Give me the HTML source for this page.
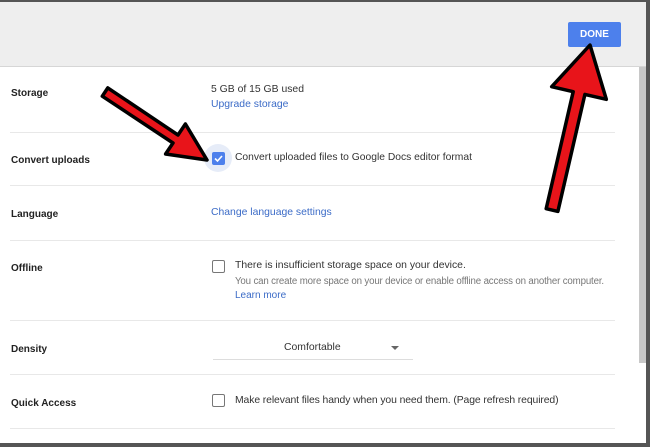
<!DOCTYPE html>
<html><head><style>
body{margin:0;width:650px;height:447px;overflow:hidden;background:#555;font-family:"Liberation Sans",sans-serif;position:relative}
.win{position:absolute;left:0;top:2px;width:646px;height:441px;background:#fff}
.hdr{position:absolute;left:0;top:0;width:646px;height:64px;background:#eeeeee;border-bottom:1px solid #d6d6d6}
.done{position:absolute;left:568px;top:20px;width:53px;height:25px;background:#4d80ec;color:#fff;font-size:10px;font-weight:bold;text-align:center;line-height:25px;border-radius:2px}
.sb{position:absolute;left:639px;top:65px;width:7px;height:296px;background:#c8c8c8}
.hr{position:absolute;left:10px;width:605px;height:1px;background:#e8e8e8}
.t{position:absolute;font-size:10.4px;color:#333;white-space:nowrap}
.lb{font-weight:bold;font-size:10px;color:#222}
.lnk{color:#3b6bc7}
.g{color:#777}
.cb{position:absolute;width:11px;height:11px;border:1.5px solid #777;border-radius:2px}
</style></head><body>
<div class="win">
<div class="hdr"><div class="done">DONE</div></div>
<div class="sb"></div>
<div class="hr" style="top:130px"></div>
<div class="hr" style="top:183px"></div>
<div class="hr" style="top:238px"></div>
<div class="hr" style="top:318px"></div>
<div class="hr" style="top:372px"></div>
<div class="hr" style="top:426px"></div>
<div class="t lb" style="left:11px;top:86px">Storage</div>
<div class="t" style="left:211px;top:82px">5 GB of 15 GB used</div>
<div class="t lnk" style="left:211px;top:97px">Upgrade storage</div>
<div class="t lb" style="left:11px;top:153px">Convert uploads</div>
<div style="position:absolute;left:204px;top:142px;width:28px;height:28px;border-radius:50%;background:#e6ecf8"></div>
<div style="position:absolute;left:212px;top:150px;width:13px;height:13px;background:#4d80ec;border-radius:2px"><svg width="13" height="13"><path d="M3 6.5l2.5 2.5 4.5-5" stroke="#fff" stroke-width="1.6" fill="none"/></svg></div>
<div class="t" style="left:235px;top:150px;font-size:10.3px">Convert uploaded files to Google Docs editor format</div>
<div class="t lb" style="left:11px;top:207px">Language</div>
<div class="t lnk" style="left:211px;top:205px">Change language settings</div>
<div class="t lb" style="left:11px;top:261px">Offline</div>
<div class="cb" style="left:212px;top:258px"></div>
<div class="t" style="left:235px;top:258px">There is insufficient storage space on your device.</div>
<div class="t g" style="left:235px;top:274px;font-size:9.7px;letter-spacing:-0.15px">You can create more space on your device or enable offline access on another computer.</div>
<div class="t lnk" style="left:235px;top:288px;font-size:10px">Learn more</div>
<div class="t lb" style="left:11px;top:342px">Density</div>
<div class="t" style="left:284px;top:340px">Comfortable</div>
<div style="position:absolute;left:391px;top:344px;width:0;height:0;border-left:4px solid transparent;border-right:4px solid transparent;border-top:4px solid #666"></div>
<div style="position:absolute;left:213px;top:357px;width:200px;height:1px;background:#ddd"></div>
<div class="t lb" style="left:11px;top:396px">Quick Access</div>
<div class="cb" style="left:212px;top:392px"></div>
<div class="t" style="left:235px;top:393px;letter-spacing:-0.1px">Make relevant files handy when you need them. (Page refresh required)</div>
</div>
<svg width="650" height="447" style="position:absolute;left:0;top:0">
<polygon points="107.8,87.9 178,135 185.4,124 207,160 165.6,154 173,143 102.3,96.2" fill="#e8141a" stroke="#000" stroke-width="3.5" stroke-linejoin="round"/>
<polygon points="557.9,211.4 584.9,94.4 606.3,99.3 590,45 551.7,86.7 573.2,91.7 546.2,208.7" fill="#e8141a" stroke="#000" stroke-width="3.5" stroke-linejoin="round"/>
</svg>
</body></html>
